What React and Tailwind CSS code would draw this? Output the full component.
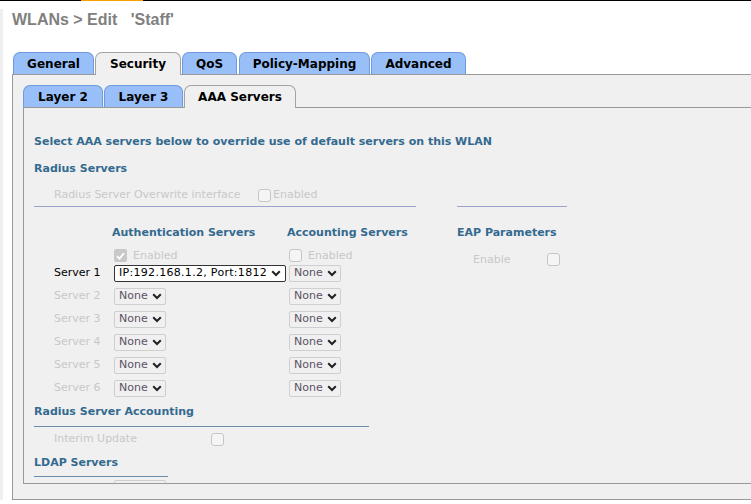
import React from "react";

function Tab({ label, active, cls }) {
  return (
    <div
      className={
        active
          ? "relative z-10 -mb-px flex h-[23px] items-center justify-center rounded-t-[7px] border border-b-0 border-[#a3a3a3] bg-[#f0f0f0] pb-px text-[12px] font-bold text-black " + cls
          : "flex h-[22px] items-center justify-center rounded-t-[7px] border border-b-0 border-[#6f9ade] bg-[#98bff8] text-[12px] font-bold text-black " + cls
      }
    >
      {label}
    </div>
  );
}

function Check({ checked }) {
  return checked ? (
    <div className="flex h-[13px] w-[13px] shrink-0 items-center justify-center rounded-[2px] bg-[#c8c8c8]">
      <svg width="9" height="8" viewBox="0 0 9 8">
        <path d="M1 4.2 L3.5 6.6 L8 1.2" fill="none" stroke="#fff" strokeWidth="1.8" />
      </svg>
    </div>
  ) : (
    <div className="h-[13px] w-[13px] shrink-0 rounded-[3px] border border-[#c6c6c6] bg-[#f5f5f5]" />
  );
}

function Chevron() {
  return (
    <svg width="10" height="7" viewBox="0 0 10 7" className="shrink-0">
      <path d="M1.2 1.2 L5 5 L8.8 1.2" fill="none" stroke="#222" strokeWidth="2" />
    </svg>
  );
}

function NoneSelect() {
  return (
    <div className="flex h-[17px] w-[52px] shrink-0 items-center justify-between rounded-[2px] border border-[#cfcfcf] pl-[4px] pr-[3px] text-[11px] text-[#5c5266]">
      <span>None</span>
      <Chevron />
    </div>
  );
}

export default function App() {
  const heading = "text-[11px] font-bold text-[#336a8f]";
  return (
    <div className="h-[504px] w-[751px] overflow-hidden bg-white font-['DejaVu_Sans',sans-serif]">
      <div className="flex h-px bg-black">
        <div className="w-[81px]" />
        <div className="w-[62px] bg-[#f5a100]" />
      </div>
      <div className="flex">
        <div className="mt-[8px] w-[3px] shrink-0 self-stretch bg-[#efefef]" />
        <div className="pl-[9px]">
          <div className="mt-[9px] h-[20px] font-['Liberation_Sans',Arial,sans-serif] text-[16px] font-bold leading-[20px] text-[#808080]">
            WLANs &gt; Edit&nbsp;&nbsp;&nbsp;'Staff'
          </div>
          <div className="mt-[22px] flex h-[22px] items-end pl-px">
            <Tab label="General" cls="w-[81px]" />
            <Tab label="Security" active cls="ml-px w-[86px]" />
            <Tab label="QoS" cls="ml-px w-[55px]" />
            <Tab label="Policy-Mapping" cls="ml-[2px] w-[131px]" />
            <Tab label="Advanced" cls="ml-px w-[95px]" />
          </div>
          <div className="h-[426px] w-[780px] border border-[#999] bg-[#f0f0f0] pl-[10px] pt-[10px]">
            <div className="flex h-[22px] items-end">
              <Tab label="Layer 2" cls="w-[80px]" />
              <Tab label="Layer 3" cls="ml-px w-[79px]" />
              <Tab label="AAA Servers" active cls="ml-px w-[112px]" />
            </div>
            <div className="h-[377px] w-[780px] overflow-hidden border border-[#999] bg-[#f0f0f0] pl-[10px] pt-[24px] text-[11px]">
              <div className={"flex h-[20px] items-center " + heading}>
                Select AAA servers below to override use of default servers on this WLAN
              </div>
              <div className={"mt-[7px] flex h-[20px] items-center " + heading}>Radius Servers</div>
              <div className="mt-[6px] flex h-[21px] items-center pl-[20px] text-[#c8c8c8]">
                <div className="w-[204px]">Radius Server Overwrite interface</div>
                <Check />
                <span className="ml-[2px]">Enabled</span>
              </div>
              <div className="flex h-px">
                <div className="w-[382px] bg-[#9da2c9]" />
                <div className="ml-[41px] w-[110px] bg-[#9da2c9]" />
              </div>
              <div className={"mt-[16px] flex h-[20px] items-center pl-[78px] " + heading}>
                <div className="w-[175px]">Authentication Servers</div>
                <div className="w-[170px]">Accounting Servers</div>
                <div>EAP Parameters</div>
              </div>
              <div className="mt-[4px] flex h-[16px] items-start pl-[80px] text-[#c8c8c8]">
                <div className="flex w-[175px] items-center">
                  <Check checked />
                  <span className="ml-[6px] mt-[1px]">Enabled</span>
                </div>
                <div className="flex w-[168px] items-center">
                  <Check />
                  <span className="ml-[6px] mt-[1px]">Enabled</span>
                </div>
                <div className="mt-[4px] flex items-center pl-[16px]">
                  <span className="mt-[1px] w-[74px]">Enable</span>
                  <Check />
                </div>
              </div>
              <div className="mt-[2px] flex h-[17px] items-center pl-[20px]">
                <div className="w-[60px] text-black">Server 1</div>
                <div className="w-[175px]">
                  <div className="flex h-[17px] w-[172px] items-center justify-between whitespace-nowrap rounded-[2px] border border-[#333] bg-white pl-[4px] pr-[4px] text-[11px] tracking-[0.3px] text-black">
                    <span className="whitespace-nowrap">IP:192.168.1.2, Port:1812</span>
                    <Chevron />
                  </div>
                </div>
                <NoneSelect />
              </div>
              {["Server 2", "Server 3", "Server 4", "Server 5", "Server 6"].map((s) => (
                <div key={s} className="mt-[6px] flex h-[17px] items-center pl-[20px]">
                  <div className="w-[60px] text-[#c8c8c8]">{s}</div>
                  <div className="w-[175px]">
                    <NoneSelect />
                  </div>
                  <NoneSelect />
                </div>
              ))}
              <div className={"mt-[5px] flex h-[20px] items-center " + heading}>Radius Server Accounting</div>
              <div className="mt-[4px] h-px w-[335px] bg-[#6a8caa]" />
              <div className="mt-[2px] flex h-[20px] items-center pl-[20px] text-[#c8c8c8]">
                <div className="w-[157px]">Interim Update</div>
                <Check />
              </div>
              <div className={"mt-[4px] flex h-[20px] items-center " + heading}>LDAP Servers</div>
              <div className="mt-[3px] h-px w-[134px] bg-[#6a8caa]" />
              <div className="mt-[3px] pl-[80px]">
                <div className="h-[17px] w-[52px] rounded-[2px] border border-[#cfcfcf]" />
              </div>
            </div>
          </div>
        </div>
      </div>
    </div>
  );
}
